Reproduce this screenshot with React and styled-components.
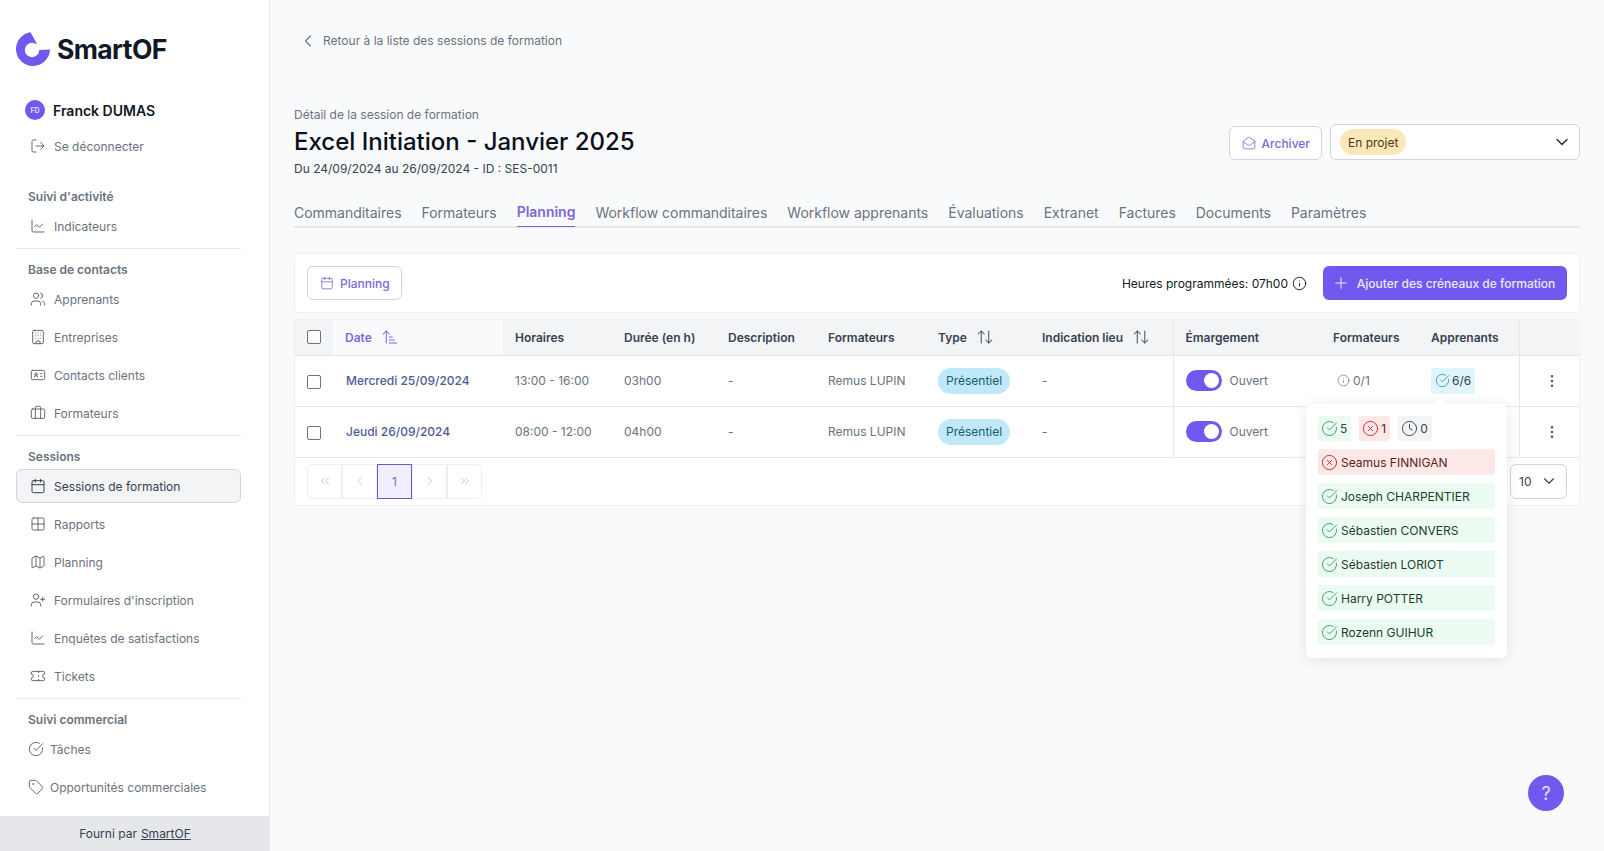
import React from "react";
import styled, { createGlobalStyle } from "styled-components";
import {
  ArrowUpDown,
  ArrowUpNarrowWide,
  Briefcase,
  Building,
  Calendar,
  ChartLine,
  ChevronDown,
  ChevronLeft,
  ChevronRight,
  ChevronsLeft,
  ChevronsRight,
  CircleCheckBig,
  CircleX,
  Clock,
  EllipsisVertical,
  Grid2x2,
  IdCard,
  Info,
  LogOut,
  MailOpen,
  Map,
  Plus,
  Tag,
  Ticket,
  UserPlus,
  Users,
} from "lucide-react";

const PURPLE = "#7159f0";
const PURPLE_TEXT = "#7c68d8";

const GlobalStyle = createGlobalStyle`
  html, body {
    margin: 0;
    padding: 0;
    height: 100%;
    overflow: hidden;
    background: #f9fafb;
    font-family: Inter, "Liberation Sans", sans-serif;
    font-size: 12px;
    color: #111827;
  }
  * {
    box-sizing: border-box;
  }
`;

const Layout = styled.div`
  display: flex;
  height: 100vh;
`;

const Sidebar = styled.aside`
  width: 270px;
  flex-shrink: 0;
  display: flex;
  flex-direction: column;
  background: #ffffff;
  border-right: 1px solid #e5e7eb;
`;

const SidebarScroll = styled.div`
  flex: 1;
  min-height: 0;
  overflow: hidden;
  padding: 32px 28px 0 16px;
`;

const Brand = styled.div`
  display: flex;
  align-items: center;
  gap: 7px;
  height: 34px;
`;

const BrandName = styled.span`
  font-size: 26.5px;
  font-weight: 700;
  letter-spacing: -0.6px;
  color: #111827;
`;

const UserRow = styled.div`
  display: flex;
  align-items: center;
  gap: 8px;
  height: 24px;
  margin: 32px 0 0 9px;
`;

const Avatar = styled.span`
  width: 20px;
  height: 20px;
  border-radius: 50%;
  background: ${PURPLE};
  color: #e8e4fd;
  font-size: 7px;
  font-weight: 600;
  display: flex;
  align-items: center;
  justify-content: center;
`;

const UserName = styled.span`
  font-size: 14px;
  font-weight: 600;
  color: #111827;
`;

const Section = styled.section`
  display: flex;
  flex-direction: column;
  margin-top: ${({ $top }) => $top ?? 9}px;
  padding-bottom: 5px;
  border-bottom: ${({ $plain }) => ($plain ? "none" : "1px solid #e5e7eb")};
`;

const SectionLabel = styled.div`
  height: 22px;
  margin-bottom: 2px;
  padding-left: 12px;
  display: flex;
  align-items: center;
  font-size: 12px;
  font-weight: 600;
  color: #6b7280;
`;

const NavItem = styled.div`
  height: 34px;
  display: flex;
  align-items: center;
  gap: ${({ $tight }) => ($tight ? 6 : 8)}px;
  padding-left: ${({ $tight }) => ($tight ? 11 : 13)}px;
  border-radius: 6px;
  font-size: 12px;
  margin-bottom: 4px;
  border: 1px solid ${({ $active }) => ($active ? "#d1d5db" : "transparent")};
  background: ${({ $active }) => ($active ? "#f3f4f6" : "transparent")};
  color: ${({ $active }) => ($active ? "#374151" : "#6b7280")};

  svg {
    color: ${({ $active }) => ($active ? "#1f2937" : "#4b5563")};
  }

  &:last-child {
    margin-bottom: 0;
  }
`;

const LogoutRow = styled(NavItem)`
  margin-top: 7px;
`;

const SidebarFooter = styled.div`
  height: 35px;
  flex-shrink: 0;
  background: #e5e7eb;
  margin-right: -1px;
  display: flex;
  align-items: center;
  justify-content: center;
  gap: 4px;
  font-size: 12px;
  color: #374151;
`;

const FooterLink = styled.a`
  color: #374151;
  text-decoration: underline;
`;

const Main = styled.main`
  flex: 1;
  min-width: 0;
  padding: 0 24px;
  position: relative;
`;

const BackLink = styled.div`
  height: 81px;
  display: flex;
  align-items: center;
  gap: 5px;
  padding-left: 4px;
  color: #6b7280;
  font-size: 12px;
`;

const Header = styled.header`
  display: flex;
  justify-content: space-between;
  align-items: flex-start;
  height: 117px;
  padding-top: 25px;
`;

const Overline = styled.div`
  font-size: 12px;
  line-height: 18px;
  color: #6b7280;
`;

const Title = styled.h1`
  margin: 0;
  font-size: 24px;
  line-height: 36px;
  font-weight: 500;
  color: #0b0f19;
`;

const SubTitle = styled.div`
  font-size: 12px;
  line-height: 18px;
  color: #374151;
`;

const HeaderActions = styled.div`
  display: flex;
  align-items: flex-end;
  gap: 8px;
  margin-top: 18px;
`;

const OutlineButton = styled.button`
  height: 34px;
  display: flex;
  align-items: center;
  gap: 6px;
  padding: 0 11px 0 12px;
  border: 1px solid #d1d5db;
  border-radius: 6px;
  background: #ffffff;
  color: ${PURPLE_TEXT};
  font: 500 12px Inter, "Liberation Sans", sans-serif;
`;

const StatusSelect = styled.div`
  width: 250px;
  height: 36px;
  display: flex;
  align-items: center;
  justify-content: space-between;
  padding: 0 7px 0 9px;
  border: 1px solid #d1d5db;
  border-radius: 6px;
  background: #ffffff;
  color: #1f2937;
`;

const StatusBadge = styled.span`
  height: 26px;
  display: flex;
  align-items: center;
  padding: 0 8px;
  border-radius: 13px;
  background: #fbe7b9;
  color: #4b3a12;
  font-size: 12px;
`;

const Tabs = styled.nav`
  display: flex;
  gap: 20px;
  height: 30px;
  border-bottom: 2px solid #e5e7eb;
`;

const Tab = styled.div`
  height: 29px;
  padding-bottom: 1px;
  display: flex;
  align-items: center;
  font-size: 14px;
  letter-spacing: -0.015px;
  font-weight: ${({ $active }) => ($active ? 600 : 400)};
  color: ${({ $active }) => ($active ? PURPLE_TEXT : "#6b7280")};
  border-bottom: ${({ $active }) => ($active ? `1px solid ${PURPLE_TEXT}` : "none")};
`;

const Card = styled.div`
  background: #ffffff;
  border: 1px solid #eff0f2;
  border-radius: 4px;
`;

const Toolbar = styled(Card)`
  height: 60px;
  margin-top: 25px;
  padding: 0 12px;
  display: flex;
  align-items: center;
  justify-content: space-between;
`;

const ToolbarRight = styled.div`
  display: flex;
  align-items: center;
  gap: 16px;
`;

const Hours = styled.div`
  display: flex;
  align-items: center;
  gap: 4px;
  font-size: 12px;
  color: #111827;
`;

const PrimaryButton = styled.button`
  width: 244px;
  height: 34px;
  display: flex;
  align-items: center;
  justify-content: center;
  gap: 7px;
  padding: 0 3px 0 0;
  border: none;
  border-radius: 6px;
  background: ${PURPLE};
  color: #ece9fe;
  font: 500 12px Inter, "Liberation Sans", sans-serif;
`;

const TableCard = styled(Card)`
  position: relative;
  margin-top: 6px;
`;

const Table = styled.table`
  width: 100%;
  table-layout: fixed;
  border-collapse: collapse;
`;

const HeadCell = styled.th`
  height: 35px;
  padding: 0 12px;
  text-align: left;
  font-size: 12px;
  font-weight: 600;
  color: ${({ $sorted }) => ($sorted ? PURPLE_TEXT : "#374151")};
  background: ${({ $sorted }) => ($sorted ? "#f9fafb" : "#f3f4f6")};
  border-bottom: 1px solid #e5e7eb;
  border-left: ${({ $divider }) => ($divider ? "1px solid #e5e7eb" : "none")};
`;

const HeadInner = styled.span`
  display: flex;
  align-items: center;
  gap: 9px;
`;

const Cell = styled.td`
  height: 51px;
  padding: 0 12px;
  font-size: 12px;
  color: #6b7280;
  border-bottom: 1px solid #e5e7eb;
  border-left: ${({ $divider }) => ($divider ? "1px solid #e5e7eb" : "none")};
`;

const DateLink = styled.a`
  padding-left: 1px;
  color: #4f5a96;
  font-weight: 500;
`;

const Checkbox = styled.span`
  display: block;
  width: 14px;
  height: 14px;
  margin-top: ${({ $low }) => ($low ? 3 : 0)}px;
  border: 1px solid #6b7280;
  border-radius: 2px;
  background: #ffffff;
`;

const TypeBadge = styled.span`
  display: inline-flex;
  align-items: center;
  height: 26px;
  padding: 0 8px;
  border-radius: 13px;
  background: #bfe9f8;
  color: #1c5a74;
`;

const ToggleRow = styled.div`
  display: flex;
  align-items: center;
  gap: 8px;
`;

const Toggle = styled.span`
  width: 36px;
  height: 21px;
  padding: 3px;
  border-radius: 11px;
  background: ${PURPLE};
  display: flex;
  justify-content: flex-end;

  &::after {
    content: "";
    width: 15px;
    height: 15px;
    border-radius: 50%;
    background: #ffffff;
  }
`;

const CountInfo = styled.div`
  display: flex;
  align-items: center;
  gap: 3px;
  padding-left: 4px;
`;

const CountChip = styled.span`
  display: inline-flex;
  align-items: center;
  gap: 2px;
  height: 26px;
  padding: 0 4px;
  border-radius: 3px;
  background: ${({ $bg }) => $bg};
  color: ${({ $fg }) => $fg};
`;

const ActionCell = styled.div`
  display: flex;
  justify-content: center;
  padding-left: 4px;
  color: #4b5563;
`;

const Pager = styled.div`
  height: 47px;
  padding: 0 12px;
  display: flex;
  align-items: center;
  justify-content: space-between;
`;

const PagerButtons = styled.div`
  display: flex;
`;

const PageButton = styled.div`
  width: 35px;
  height: 35px;
  display: flex;
  align-items: center;
  justify-content: center;
  border: 1px solid ${({ $active }) => ($active ? "#6b5bc9" : "#eceef1")};
  background: ${({ $active }) => ($active ? "#f1eefd" : "#ffffff")};
  color: ${({ $active }) => ($active ? PURPLE_TEXT : "#b6bac2")};

  &:first-child {
    border-radius: 5px 0 0 5px;
  }
  &:last-child {
    border-radius: 0 5px 5px 0;
  }
`;

const PageSize = styled.div`
  width: 57px;
  height: 35px;
  display: flex;
  align-items: center;
  justify-content: space-between;
  padding: 0 8px;
  border: 1px solid #d1d5db;
  border-radius: 6px;
  color: #374151;
  font-size: 12px;
`;

const Popover = styled.div`
  position: absolute;
  top: 84px;
  right: 72px;
  width: 201px;
  height: 254px;
  padding: 12px;
  background: #ffffff;
  border-radius: 6px;
  box-shadow: 0 2px 14px rgba(17, 24, 39, 0.1);
  display: flex;
  flex-direction: column;
  z-index: 5;

  &::before {
    content: "";
    position: absolute;
    top: -5px;
    left: 129px;
    width: 10px;
    height: 10px;
    background: #ffffff;
    transform: rotate(45deg);
  }
`;

const PopoverSummary = styled.div`
  display: flex;
  gap: 8px;
  margin-bottom: 8px;
`;

const SummaryChip = styled.span`
  height: 25px;
  display: inline-flex;
  align-items: center;
  gap: 2px;
  padding: 0 4px 0 3px;
  border-radius: 3px;
  font-size: 12px;
  background: ${({ $bg }) => $bg};
  color: ${({ $fg }) => $fg};
`;

const Person = styled.div`
  height: 26px;
  margin-bottom: 8px;
  padding: 0 3px;
  display: flex;
  align-items: center;
  gap: 3px;
  border-radius: 3px;
  font-size: 12px;
  background: ${({ $absent }) => ($absent ? "#fde8e8" : "#ebfbf2")};
  color: ${({ $absent }) => ($absent ? "#5f1d1d" : "#1f3d2f")};

  &:last-child {
    margin-bottom: 0;
  }
`;

const HelpButton = styled.button`
  position: fixed;
  right: 40px;
  bottom: 40px;
  width: 36px;
  height: 36px;
  border: none;
  border-radius: 50%;
  background: ${PURPLE};
  color: #e5e0fd;
  font: 400 18px Inter, "Liberation Sans", sans-serif;
`;

const Logo = () => (
  <svg width="34" height="34" viewBox="0 0 34 34">
    <path
      fill={PURPLE}
      d="M14.5 0.2 A17 17 0 1 0 34 17.6 L23.2 18 A7.2 7.2 0 1 1 16 10.8 L21 12 Z"
    />
  </svg>
);

const navIcon = { size: 16, strokeWidth: 1.3 };
const sortIcon = { size: 18, strokeWidth: 1.4, color: "#4b5563" };
const statusIcon = { size: 17, strokeWidth: 1.3 };
const columns = [38, 170, 109, 104, 100, 110, 104, 143, 148, 98, 100, 61];

const sessions = [
  { date: "Mercredi 25/09/2024", hours: "13:00 - 16:00", duration: "03h00" },
  { date: "Jeudi 26/09/2024", hours: "08:00 - 12:00", duration: "04h00" },
];

const learners = [
  { name: "Seamus FINNIGAN", absent: true },
  { name: "Joseph CHARPENTIER" },
  { name: "Sébastien CONVERS" },
  { name: "Sébastien LORIOT" },
  { name: "Harry POTTER" },
  { name: "Rozenn GUIHUR" },
];

const tabs = [
  "Commanditaires",
  "Formateurs",
  "Planning",
  "Workflow commanditaires",
  "Workflow apprenants",
  "Évaluations",
  "Extranet",
  "Factures",
  "Documents",
  "Paramètres",
];

const App = () => {
  return (
    <Layout>
      <GlobalStyle />
      <Sidebar>
        <SidebarScroll>
          <Brand>
            <Logo />
            <BrandName>SmartOF</BrandName>
          </Brand>
          <UserRow>
            <Avatar>FD</Avatar>
            <UserName>Franck DUMAS</UserName>
          </UserRow>
          <LogoutRow>
            <LogOut {...navIcon} />
            Se déconnecter
          </LogoutRow>

          <Section $top={22}>
            <SectionLabel>Suivi d'activité</SectionLabel>
            <NavItem>
              <ChartLine {...navIcon} />
              Indicateurs
            </NavItem>
          </Section>

          <Section>
            <SectionLabel>Base de contacts</SectionLabel>
            <NavItem>
              <Users {...navIcon} />
              Apprenants
            </NavItem>
            <NavItem>
              <Building {...navIcon} />
              Entreprises
            </NavItem>
            <NavItem>
              <IdCard {...navIcon} />
              Contacts clients
            </NavItem>
            <NavItem>
              <Briefcase {...navIcon} />
              Formateurs
            </NavItem>
          </Section>

          <Section>
            <SectionLabel>Sessions</SectionLabel>
            <NavItem $active>
              <Calendar {...navIcon} />
              Sessions de formation
            </NavItem>
            <NavItem>
              <Grid2x2 {...navIcon} />
              Rapports
            </NavItem>
            <NavItem>
              <Map {...navIcon} />
              Planning
            </NavItem>
            <NavItem>
              <UserPlus {...navIcon} />
              Formulaires d'inscription
            </NavItem>
            <NavItem>
              <ChartLine {...navIcon} />
              Enquêtes de satisfactions
            </NavItem>
            <NavItem>
              <Ticket {...navIcon} />
              Tickets
            </NavItem>
          </Section>

          <Section $plain>
            <SectionLabel>Suivi commercial</SectionLabel>
            <NavItem $tight>
              <CircleCheckBig {...navIcon} />
              Tâches
            </NavItem>
            <NavItem $tight>
              <Tag {...navIcon} />
              Opportunités commerciales
            </NavItem>
          </Section>
        </SidebarScroll>
        <SidebarFooter>
          Fourni par <FooterLink>SmartOF</FooterLink>
        </SidebarFooter>
      </Sidebar>

      <Main>
        <BackLink>
          <ChevronLeft size={20} strokeWidth={1.4} />
          Retour à la liste des sessions de formation
        </BackLink>

        <Header>
          <div>
            <Overline>Détail de la session de formation</Overline>
            <Title>Excel Initiation - Janvier 2025</Title>
            <SubTitle>Du 24/09/2024 au 26/09/2024 - ID : SES-0011</SubTitle>
          </div>
          <HeaderActions>
            <OutlineButton>
              <MailOpen size={14} strokeWidth={1.4} />
              Archiver
            </OutlineButton>
            <StatusSelect>
              <StatusBadge>En projet</StatusBadge>
              <ChevronDown size={20} strokeWidth={1.6} />
            </StatusSelect>
          </HeaderActions>
        </Header>

        <Tabs>
          {tabs.map((tab) => (
            <Tab key={tab} $active={tab === "Planning"}>
              {tab}
            </Tab>
          ))}
        </Tabs>

        <Toolbar>
          <OutlineButton>
            <Calendar size={14} strokeWidth={1.4} />
            Planning
          </OutlineButton>
          <ToolbarRight>
            <Hours>
              Heures programmées: 07h00
              <Info size={15} strokeWidth={1.5} />
            </Hours>
            <PrimaryButton>
              <Plus size={18} strokeWidth={1.4} />
              Ajouter des créneaux de formation
            </PrimaryButton>
          </ToolbarRight>
        </Toolbar>

        <TableCard>
          <Table>
            <colgroup>
              {columns.map((w, i) => (
                <col key={i} style={{ width: w }} />
              ))}
            </colgroup>
            <thead>
              <tr>
                <HeadCell>
                  <Checkbox />
                </HeadCell>
                <HeadCell $sorted>
                  <HeadInner>
                    Date
                    <ArrowUpNarrowWide {...sortIcon} color={PURPLE_TEXT} />
                  </HeadInner>
                </HeadCell>
                <HeadCell>Horaires</HeadCell>
                <HeadCell>Durée (en h)</HeadCell>
                <HeadCell>Description</HeadCell>
                <HeadCell>Formateurs</HeadCell>
                <HeadCell>
                  <HeadInner>
                    Type
                    <ArrowUpDown {...sortIcon} />
                  </HeadInner>
                </HeadCell>
                <HeadCell>
                  <HeadInner>
                    Indication lieu
                    <ArrowUpDown {...sortIcon} />
                  </HeadInner>
                </HeadCell>
                <HeadCell $divider>Émargement</HeadCell>
                <HeadCell>Formateurs</HeadCell>
                <HeadCell>Apprenants</HeadCell>
                <HeadCell $divider />
              </tr>
            </thead>
            <tbody>
              {sessions.map((s, i) => (
                <tr key={s.date}>
                  <Cell>
                    <Checkbox $low />
                  </Cell>
                  <Cell>
                    <DateLink>{s.date}</DateLink>
                  </Cell>
                  <Cell>{s.hours}</Cell>
                  <Cell>{s.duration}</Cell>
                  <Cell>-</Cell>
                  <Cell>Remus LUPIN</Cell>
                  <Cell>
                    <TypeBadge>Présentiel</TypeBadge>
                  </Cell>
                  <Cell>-</Cell>
                  <Cell $divider>
                    <ToggleRow>
                      <Toggle />
                      Ouvert
                    </ToggleRow>
                  </Cell>
                  <Cell>
                    {i === 0 && (
                      <CountInfo>
                        <Info size={13} strokeWidth={1.3} />
                        0/1
                      </CountInfo>
                    )}
                  </Cell>
                  <Cell>
                    {i === 0 && (
                      <CountChip $bg="#e0f4fc" $fg="#374151">
                        <CircleCheckBig size={15} strokeWidth={1.4} color="#2f9dbd" />
                        6/6
                      </CountChip>
                    )}
                  </Cell>
                  <Cell $divider>
                    <ActionCell>
                      <EllipsisVertical size={16} strokeWidth={1.8} />
                    </ActionCell>
                  </Cell>
                </tr>
              ))}
            </tbody>
          </Table>

          <Pager>
            <PagerButtons>
              <PageButton>
                <ChevronsLeft size={14} strokeWidth={1.4} />
              </PageButton>
              <PageButton>
                <ChevronLeft size={14} strokeWidth={1.4} />
              </PageButton>
              <PageButton $active>1</PageButton>
              <PageButton>
                <ChevronRight size={14} strokeWidth={1.4} />
              </PageButton>
              <PageButton>
                <ChevronsRight size={14} strokeWidth={1.4} />
              </PageButton>
            </PagerButtons>
            <PageSize>
              10
              <ChevronDown size={18} strokeWidth={1.5} />
            </PageSize>
          </Pager>

          <Popover>
            <PopoverSummary>
              <SummaryChip $bg="#ebfbf2" $fg="#374151">
                <CircleCheckBig {...statusIcon} color="#2e9e68" />5
              </SummaryChip>
              <SummaryChip $bg="#fde8e8" $fg="#5f1d1d">
                <CircleX {...statusIcon} color="#c02626" />1
              </SummaryChip>
              <SummaryChip $bg="#f3f4f6" $fg="#374151">
                <Clock {...statusIcon} color="#374151" />0
              </SummaryChip>
            </PopoverSummary>
            {learners.map((l) => (
              <Person key={l.name} $absent={l.absent}>
                {l.absent ? (
                  <CircleX {...statusIcon} color="#c02626" />
                ) : (
                  <CircleCheckBig {...statusIcon} color="#2e9e68" />
                )}
                {l.name}
              </Person>
            ))}
          </Popover>
        </TableCard>

        <HelpButton>?</HelpButton>
      </Main>
    </Layout>
  );
};

export default App;
